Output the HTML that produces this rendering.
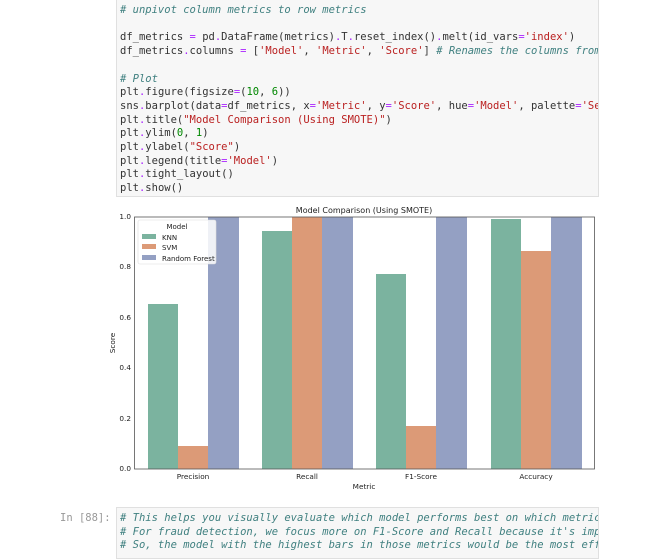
<!DOCTYPE html>
<html><head><meta charset="utf-8"><style>
body{margin:0;width:650px;height:548px;background:#fff;overflow:hidden;position:relative;font-family:"DejaVu Sans Mono","Liberation Mono",monospace}
.cell{position:absolute;left:116px;width:481px;background:#f7f7f7;border:1px solid #e0e0e0;overflow:hidden}
pre{margin:0;font-family:"DejaVu Sans Mono",monospace;font-size:10.5px;line-height:13.7px;color:#333;white-space:pre;padding-left:3px}
.c{color:#408080;font-style:italic}.s{color:#ba2121}.o{color:#aa22ff}.n{color:#080}
</style></head><body>
<div class="cell" style="top:-4px;height:200px;border-top:none">
<pre style="padding-top:8px"><span class="c"># unpivot column metrics to row metrics</span>

df_metrics <span class="o">=</span> pd<span class="o">.</span>DataFrame(metrics)<span class="o">.</span>T<span class="o">.</span>reset_index()<span class="o">.</span>melt(id_vars<span class="o">=</span><span class="s">'index'</span>)
df_metrics<span class="o">.</span>columns <span class="o">=</span> [<span class="s">'Model'</span>, <span class="s">'Metric'</span>, <span class="s">'Score'</span>] <span class="c"># Renames the columns from</span>

<span class="c"># Plot</span>
plt<span class="o">.</span>figure(figsize<span class="o">=</span>(<span class="n">10</span>, <span class="n">6</span>))
sns<span class="o">.</span>barplot(data<span class="o">=</span>df_metrics, x<span class="o">=</span><span class="s">'Metric'</span>, y<span class="o">=</span><span class="s">'Score'</span>, hue<span class="o">=</span><span class="s">'Model'</span>, palette<span class="o">=</span><span class="s">'Se</span>
plt<span class="o">.</span>title(<span class="s">"Model Comparison (Using SMOTE)"</span>)
plt<span class="o">.</span>ylim(<span class="n">0</span>, <span class="n">1</span>)
plt<span class="o">.</span>ylabel(<span class="s">"Score"</span>)
plt<span class="o">.</span>legend(title<span class="o">=</span><span class="s">'Model'</span>)
plt<span class="o">.</span>tight_layout()
plt<span class="o">.</span>show()</pre></div>

<svg style="position:absolute;left:0;top:0" width="650" height="548" font-family="DejaVu Sans, sans-serif" font-size="7.5" fill="#222">
<text x="364" y="213" text-anchor="middle" font-size="8">Model Comparison (Using SMOTE)</text>
<g>
<rect x="148" y="304" width="30" height="165" fill="#7bb39f"/>
<rect x="178" y="446" width="30" height="23" fill="#dc9a77"/>
<rect x="208" y="217" width="31" height="252" fill="#94a0c3"/>
<rect x="262" y="231" width="30" height="238" fill="#7bb39f"/>
<rect x="292" y="217" width="30" height="252" fill="#dc9a77"/>
<rect x="322" y="217" width="31" height="252" fill="#94a0c3"/>
<rect x="376" y="274" width="30" height="195" fill="#7bb39f"/>
<rect x="406" y="426" width="30" height="43" fill="#dc9a77"/>
<rect x="436" y="217" width="31" height="252" fill="#94a0c3"/>
<rect x="491" y="219" width="30" height="250" fill="#7bb39f"/>
<rect x="521" y="251" width="30" height="218" fill="#dc9a77"/>
<rect x="551" y="217" width="31" height="252" fill="#94a0c3"/>
</g>
<rect x="134.5" y="217" width="460" height="252" fill="none" stroke="#555" stroke-width="0.8"/>
<g font-size="7.3" text-anchor="end">
<text x="131" y="471">0.0</text><text x="131" y="421">0.2</text><text x="131" y="370">0.4</text><text x="131" y="320">0.6</text><text x="131" y="269">0.8</text><text x="131" y="219">1.0</text>
</g>
<g font-size="7.3" text-anchor="middle">
<text x="193" y="479">Precision</text><text x="307" y="479">Recall</text><text x="421" y="479">F1-Score</text><text x="536" y="479">Accuracy</text>
<text x="364" y="489">Metric</text>
<text transform="translate(115,343) rotate(-90)">Score</text>
</g>
<rect x="138" y="220" width="78" height="44" rx="2" fill="#fff" fill-opacity="0.85" stroke="#ddd" stroke-width="0.6"/>
<text x="177" y="229" font-size="7" text-anchor="middle">Model</text>
<rect x="142" y="234" width="14" height="5" fill="#7bb39f"/><text x="162" y="240" font-size="7">KNN</text>
<rect x="142" y="244" width="14" height="5" fill="#dc9a77"/><text x="162" y="250" font-size="7">SVM</text>
<rect x="142" y="255" width="14" height="5" fill="#94a0c3"/><text x="162" y="261" font-size="7">Random Forest</text>
</svg>

<div style="position:absolute;left:60px;top:512px;font-size:10.5px;color:#999">In [88]:</div>
<div class="cell" style="top:507px;height:50px">
<pre style="padding-top:4px"><span class="c"># This helps you visually evaluate which model performs best on which metric
# For fraud detection, we focus more on F1-Score and Recall because it's imp
# So, the model with the highest bars in those metrics would be the most eff</span></pre></div>
</body></html>
